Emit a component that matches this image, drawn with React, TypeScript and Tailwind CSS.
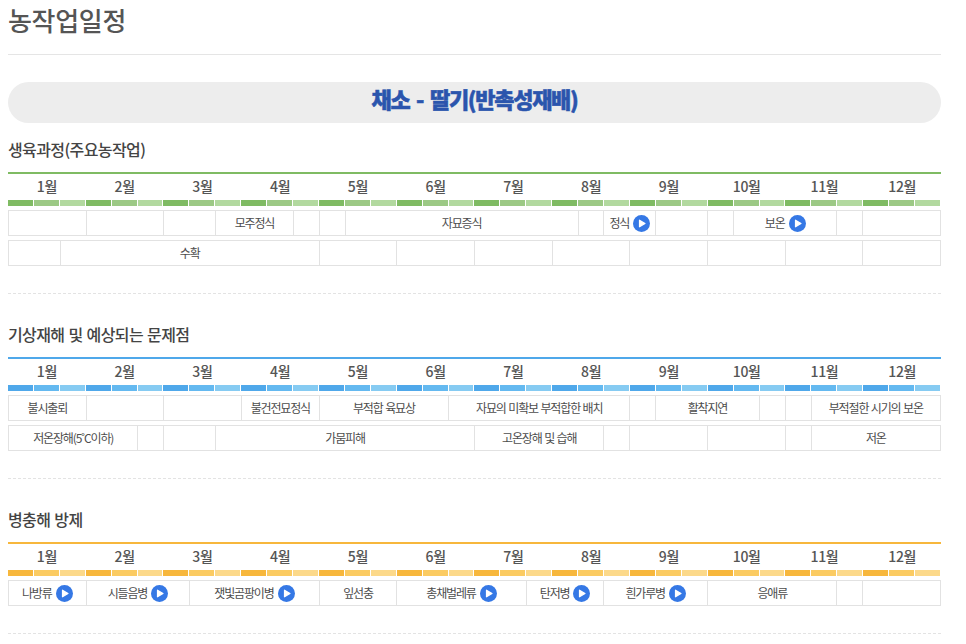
type Cell = { span: number; label?: string; play?: boolean };

const months = ["1월", "2월", "3월", "4월", "5월", "6월", "7월", "8월", "9월", "10월", "11월", "12월"];

const sections = [
  {
    title: "생육과정(주요농작업)",
    line: "border-[#7fbb63]",
    shades: ["bg-[#7fbb63]", "bg-[#9cc985]", "bg-[#b2d99f]"],
    rows: [
      [
        { span: 3 },
        { span: 3 },
        { span: 2 },
        { span: 3, label: "모주정식" },
        { span: 1 },
        { span: 1 },
        { span: 9, label: "자묘증식" },
        { span: 1 },
        { span: 2, label: "정식", play: true },
        { span: 2 },
        { span: 1 },
        { span: 4, label: "보온", play: true },
        { span: 1 },
        { span: 3 },
      ],
      [
        { span: 2 },
        { span: 10, label: "수확" },
        { span: 3 },
        { span: 3 },
        { span: 3 },
        { span: 3 },
        { span: 3 },
        { span: 3 },
        { span: 3 },
        { span: 3 },
      ],
    ] as Cell[][],
  },
  {
    title: "기상재해 및 예상되는 문제점",
    line: "border-[#4fa8ea]",
    shades: ["bg-[#4fa8ea]", "bg-[#64b9f0]", "bg-[#86cbf2]"],
    rows: [
      [
        { span: 3, label: "불시출뢰" },
        { span: 3 },
        { span: 3 },
        { span: 3, label: "불건전묘정식" },
        { span: 5, label: "부적합 육묘상" },
        { span: 7, label: "자묘의 미확보 부적합한 배치" },
        { span: 1 },
        { span: 4, label: "활착지연" },
        { span: 1 },
        { span: 1 },
        { span: 5, label: "부적절한 시기의 보온" },
      ],
      [
        { span: 5, label: "저온장해(5˚C이하)" },
        { span: 1 },
        { span: 2 },
        { span: 10, label: "가뭄피해" },
        { span: 5, label: "고온장해 및 습해" },
        { span: 1 },
        { span: 3 },
        { span: 3 },
        { span: 1 },
        { span: 5, label: "저온" },
      ],
    ] as Cell[][],
  },
  {
    title: "병충해 방제",
    line: "border-[#f7b73c]",
    shades: ["bg-[#f7b73c]", "bg-[#fbcb62]", "bg-[#fcd98a]"],
    rows: [
      [
        { span: 3, label: "나방류", play: true },
        { span: 4, label: "시들음병", play: true },
        { span: 5, label: "잿빛곰팡이병", play: true },
        { span: 3, label: "잎선충" },
        { span: 5, label: "총채벌레류", play: true },
        { span: 3, label: "탄저병", play: true },
        { span: 4, label: "흰가루병", play: true },
        { span: 5, label: "응애류" },
        { span: 1 },
        { span: 3 },
      ],
    ] as Cell[][],
  },
];

const PlayIcon = () => (
  <svg width="17" height="17" viewBox="0 0 17 17" className="ml-[4px] shrink-0">
    <circle cx="8.5" cy="8.5" r="8.5" fill="#3578e5" />
    <path d="M6.5 5.2 L12 8.5 L6.5 11.8 Z" fill="#fff" stroke="#fff" strokeWidth="1.2" strokeLinejoin="round" />
  </svg>
);

const Section = ({ section }: { section: (typeof sections)[number] }) => (
  <section className="mt-[19px] border-b border-dashed border-[#e3e3e3] pb-[27px] first:mt-0">
    <h3 className="h-[44px] text-[16px] leading-[42px] font-medium tracking-[-0.6px] [word-spacing:1px] text-[#444]">
      {section.title}
    </h3>
    <div className={`border-t-2 ${section.line}`}>
      <div className="grid h-[26px] grid-cols-12 items-center pb-[2px]">
        {months.map((month) => (
          <div key={month} className="text-center text-[14px] font-medium tracking-[-0.4px] text-[#555]">
            {month}
          </div>
        ))}
      </div>
      <div className="grid h-[6px] grid-cols-[repeat(36,1fr)]">
        {Array.from({ length: 36 }, (_, i) => (
          <div key={i} className={`border-r border-white ${section.shades[i % 3]}`} />
        ))}
      </div>
      <div className="mt-[4px] flex flex-col gap-[4px]">
        {section.rows.map((row, r) => (
          <div key={r} className="grid h-[26px] grid-cols-[repeat(36,1fr)] border-y border-r border-[#e2e2e2]">
            {row.map((cell, c) => (
              <div
                key={c}
                style={{ gridColumn: `span ${cell.span}` }}
                className="flex items-center justify-center border-l border-[#e2e2e2] text-[12px] tracking-[-1.15px] [word-spacing:1px] whitespace-nowrap text-[#4d4d4d]"
              >
                {cell.play ? <span className="mb-[1px]">{cell.label}</span> : cell.label}
                {cell.play && <PlayIcon />}
              </div>
            ))}
          </div>
        ))}
      </div>
    </div>
  </section>
);

export default function App() {
  return (
    <div className="ml-2 w-[933px] bg-white font-['Noto_Sans_CJK_KR',sans-serif]">
      <h1 className="h-[55px] border-b border-[#e5e5e5] text-[26px] leading-[39px] font-medium tracking-[-0.3px] text-[#555]">
        농작업일정
      </h1>
      <div className="mt-[27px] mb-[5px] flex h-[41px] items-center justify-center rounded-[21px] bg-[#ededed] pb-[9px] text-[22px] font-black tracking-[-1.3px] [word-spacing:3px] whitespace-pre text-[#2b55ad] [-webkit-text-stroke:0.5px_#2b55ad]">
        채소 - 딸기(반촉성재배)
      </div>
      <div>
        {sections.map((section) => (
          <Section key={section.title} section={section} />
        ))}
      </div>
    </div>
  );
}
